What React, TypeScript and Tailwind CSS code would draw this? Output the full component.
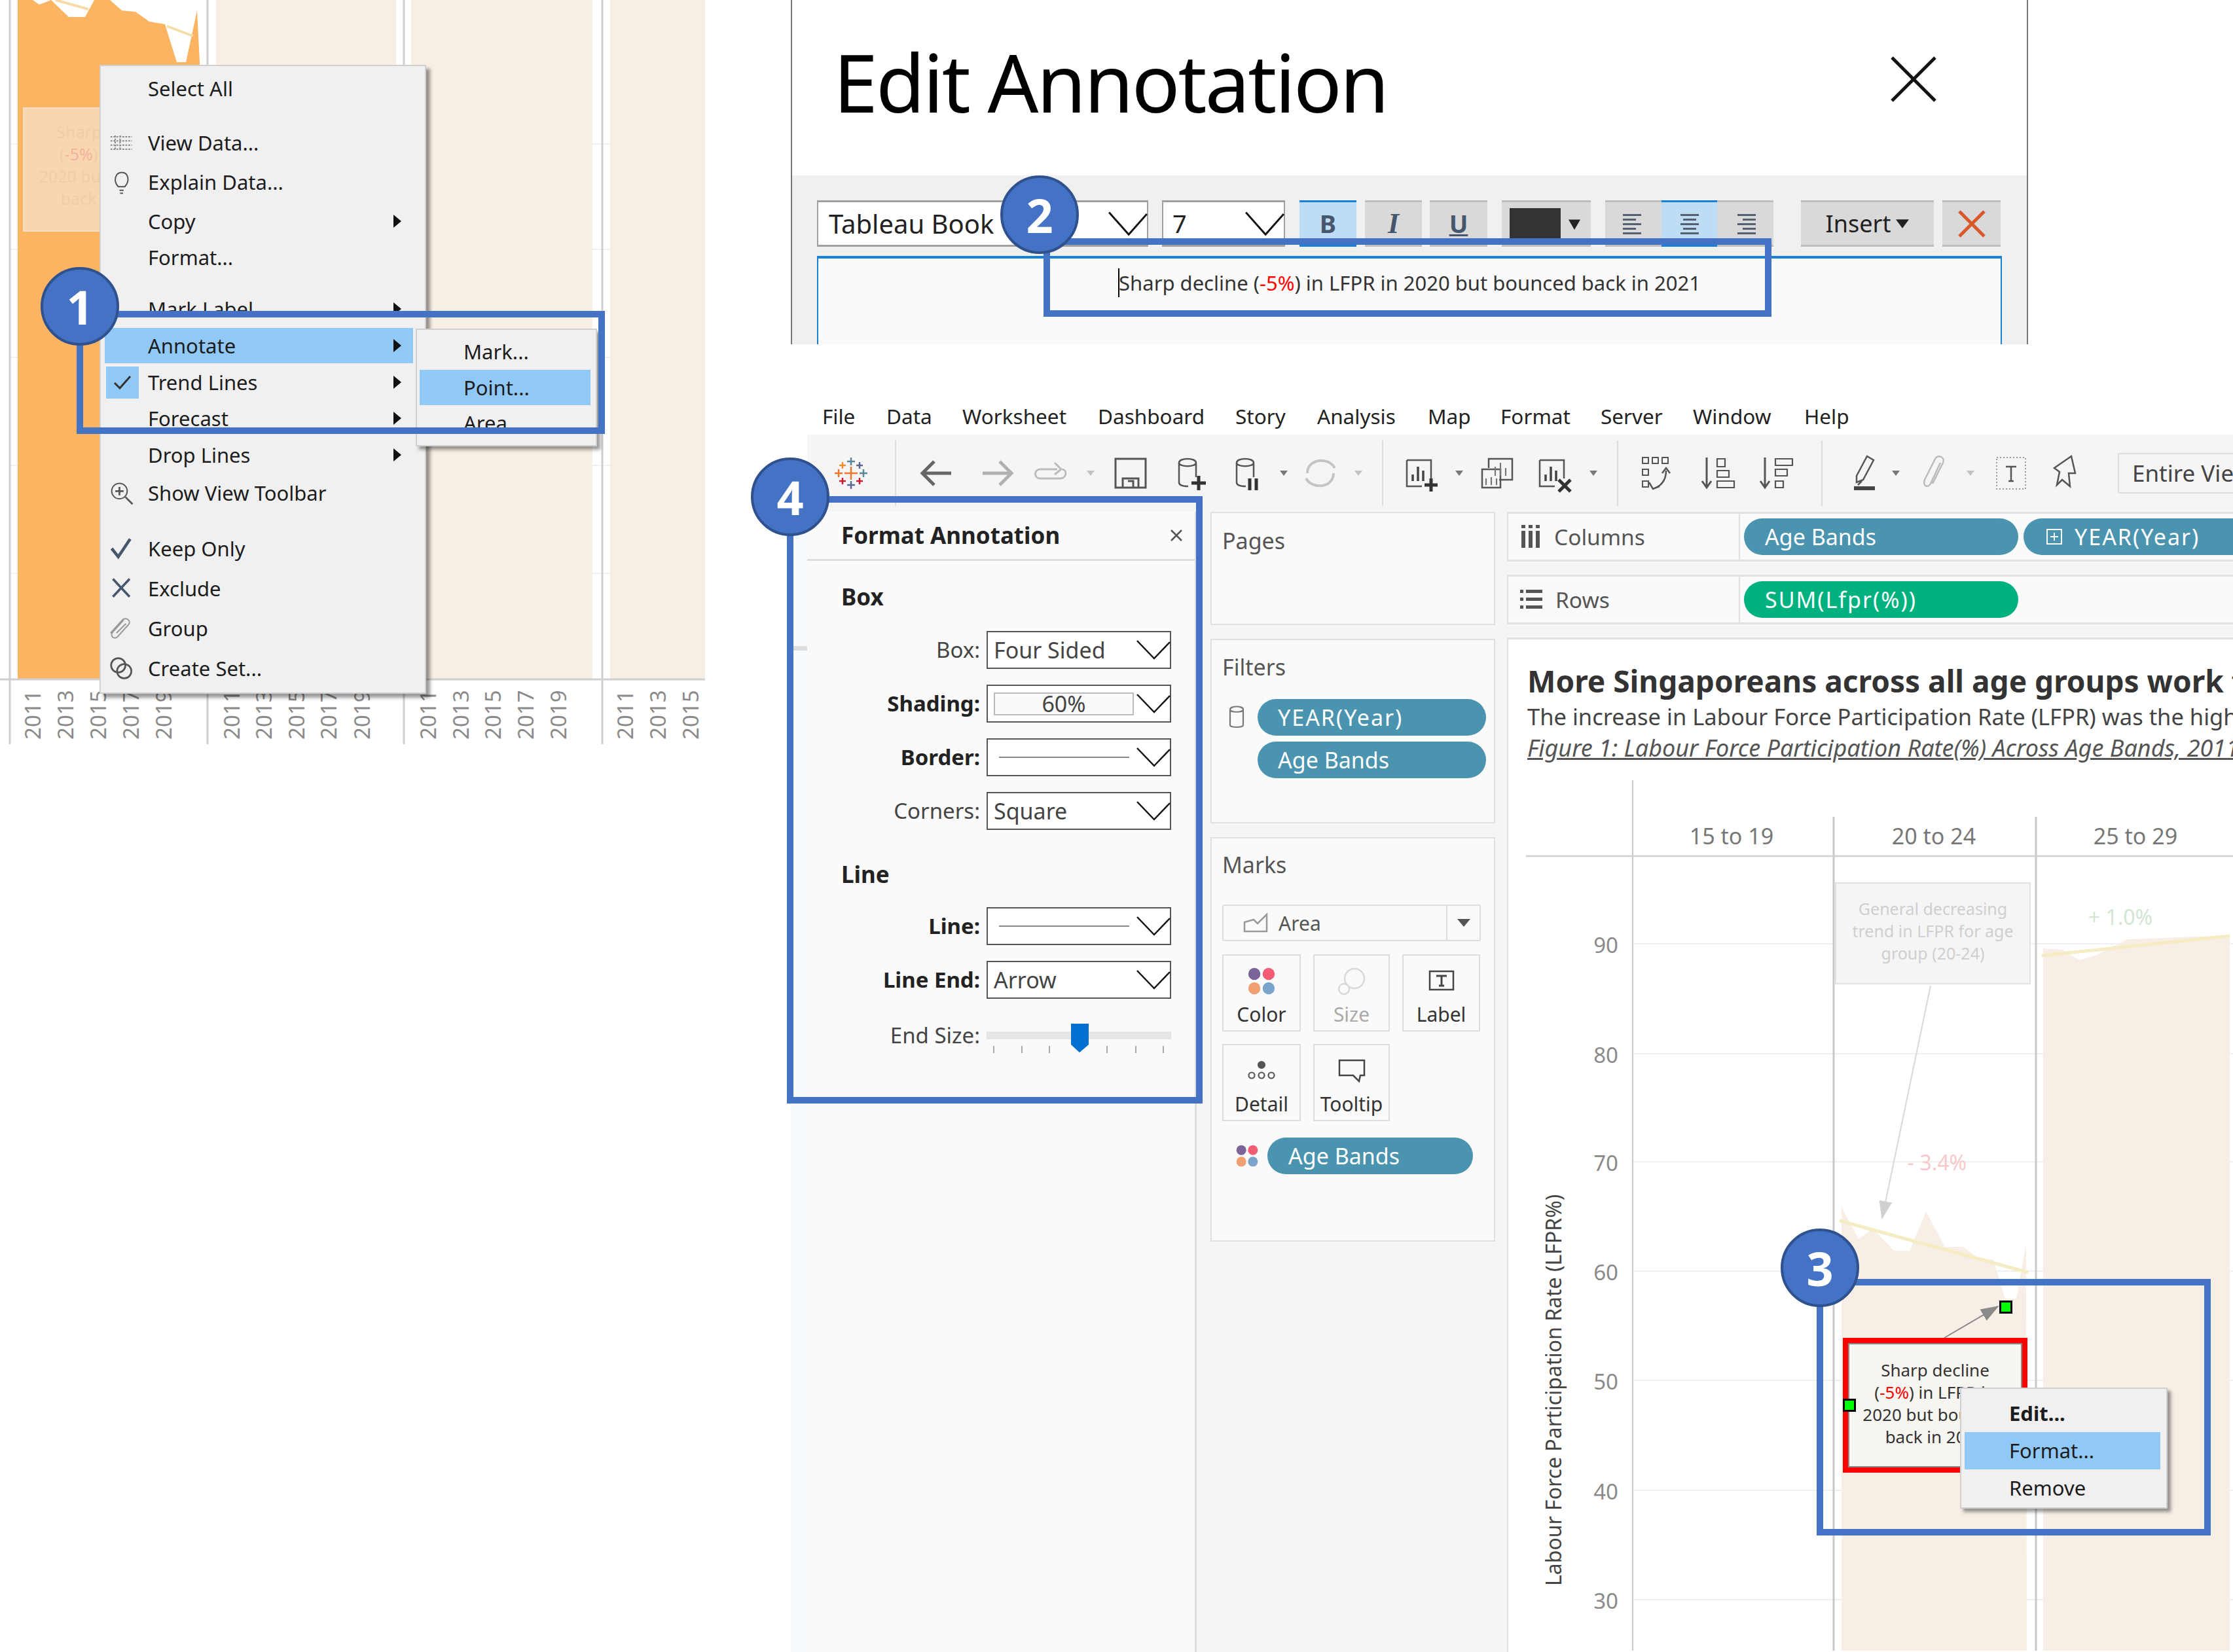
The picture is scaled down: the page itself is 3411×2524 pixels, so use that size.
import type { ReactNode } from "react";

const years = ["2011", "2013", "2015", "2017", "2019"];
const yearColumns = [
  { xs: [50, 100, 150, 200, 250], labels: years },
  { xs: [354, 403, 453, 502, 553], labels: years },
  { xs: [654, 704, 753, 803, 853], labels: years },
  { xs: [955, 1005, 1055], labels: years.slice(0, 3) },
];

// --- small drawings ---
function Caret({ className = "" }: { className?: string }) {
  return (
    <svg width="16" height="12" viewBox="0 0 16 12" className={`shrink-0 ${className}`}>
      <path d="M2 2 H14 L8 10 Z" fill="#777" />
    </svg>
  );
}

function Chevron({ big }: { big?: boolean }) {
  const w = big ? 60 : 52;
  const h = big ? 40 : 32;
  return (
    <svg width={w} height={h} viewBox="0 0 52 32" preserveAspectRatio="none" className="shrink-0 -mr-[1px]">
      <path d="M1 2 L27 29 L51 4" fill="none" stroke="#111" strokeWidth="2.5" />
    </svg>
  );
}

function SubArrow() {
  return (
    <svg width="12" height="20" viewBox="0 0 12 20" className="absolute left-[441px] top-[17px]">
      <path d="M0 0 L12 10 L0 20 Z" fill="#111" />
    </svg>
  );
}

function Ico({ children, className = "", w = 56 }: { children: ReactNode; className?: string; w?: number }) {
  return (
    <svg width={w} height="60" viewBox={`0 0 ${w} 60`} fill="none" stroke="#555" strokeWidth="2.5" className={`shrink-0 ${className}`}>
      {children}
    </svg>
  );
}

function TableauLogo({ className = "" }: { className?: string }) {
  const crosses = [
    [28, 30, 10, "#e8762b"],
    [28, 12, 6, "#5b879b"],
    [28, 48, 6, "#5b6591"],
    [9, 30, 6, "#e8762b"],
    [47, 30, 6, "#5b879b"],
    [15, 18, 5, "#eb912b"],
    [41, 18, 5, "#5b6591"],
    [15, 42, 5, "#c72035"],
    [41, 42, 5, "#c72035"],
  ] as const;
  return (
    <Ico className={className}>
      {crosses.map(([x, y, r, c]) => (
        <path key={`${x}-${y}`} d={`M${x - r} ${y} H${x + r} M${x} ${y - r} V${y + r}`} stroke={c} strokeWidth="2.5" />
      ))}
    </Ico>
  );
}

function Cylinder({ x = 12 }: { x?: number }) {
  return (
    <path d={`M${x} 14 C${x} 6 ${x + 26} 6 ${x + 26} 14 V36 M${x} 14 C${x} 21 ${x + 26} 21 ${x + 26} 14 M${x} 14 V44 C${x} 48 ${x + 6} 50 ${x + 14} 50`} />
  );
}

function SheetBars() {
  return (
    <>
      <path d="M5 10 H42 V38 M5 10 V50 H28" />
      <path d="M14 42 V32 M22 42 V20 M30 42 V26" strokeWidth="3.5" stroke="#444" />
    </>
  );
}

function Sep({ className = "" }: { className?: string }) {
  return <div className={`h-[100px] w-[2px] shrink-0 bg-[#dcdcdc] ${className}`} />;
}

// --- left screenshot: chart with context menu ---
function MenuRow({
  label,
  icon,
  arrow,
  className = "",
}: {
  label: string;
  icon?: ReactNode;
  arrow?: boolean;
  className?: string;
}) {
  return (
    <div className={`relative ml-[6px] mr-[18px] flex h-[54px] items-center ${className}`}>
      <div className="flex h-full w-[66px] shrink-0 items-center pl-[2px]">{icon}</div>
      <span>{label}</span>
      {arrow && <SubArrow />}
    </div>
  );
}

function MenuIcon({ children }: { children: ReactNode }) {
  return (
    <svg width="44" height="40" viewBox="0 0 48 44" fill="none" stroke="#555" strokeWidth="2.2" className="ml-[3px]">
      {children}
    </svg>
  );
}

function ChartMenu() {
  return (
    <section className="absolute left-0 top-0 h-[1140px] w-[1080px] overflow-hidden">
      <svg width="1080" height="1140" viewBox="0 0 1080 1140" className="absolute inset-0">
        {[220, 381, 546, 711, 876].map((y) => (
          <line key={y} x1="15" x2="1077" y1={y} y2={y} stroke="#f1f1f1" strokeWidth="2" />
        ))}
        <polygon
          points="27,0 50,0 60,7 78,0 105,26 130,26 144,0 168,0 186,16 207,18 228,33 252,37 270,95 284,95 301,16 305,95 305,1038 27,1038"
          fill="#fbb461"
        />
        <path d="M85 0 L135 14 M255 40 L295 55" stroke="#f6dca8" strokeWidth="4" />
        <rect x="330" y="0" width="275" height="1038" fill="#f7eee4" />
        <rect x="628" y="0" width="277" height="1038" fill="#f7eee4" />
        <rect x="932" y="0" width="145" height="1038" fill="#f7eee4" />
        {[15, 317, 617, 920].map((x) => (
          <line key={x} x1={x} x2={x} y1="0" y2="1137" stroke="#cfcfcf" strokeWidth="3" />
        ))}
        <line x1="0" x2="1077" y1="1038" y2="1038" stroke="#cfcfcf" strokeWidth="3" />
        {yearColumns.map((col) =>
          col.xs.map((x, i) => (
            <text
              key={x}
              transform={`translate(${x + 12} 1130) rotate(-90)`}
              fontSize="33"
              fill="#8a8a8a"
              fontFamily="'Noto Sans', sans-serif"
            >
              {col.labels[i]}
            </text>
          )),
        )}
      </svg>

      {/* faded annotation under the menu */}
      <div className="absolute left-[35px] top-[164px] flex h-[190px] w-[262px] flex-col items-center justify-center border-2 border-[#f6dcc2] bg-[#f8d6b0] pb-[14px] text-[25px] leading-[34px] text-[#efcdaa]">
        <span>Sharp decline</span>
        <span>
          (<span className="text-[#f4b3a0]">-5%</span>) in LFPR
        </span>
        <span>2020 but bounced</span>
        <span>back in 2021</span>
      </div>

      <div className="absolute left-[152px] top-[99px] h-[961px] w-[499px] border-2 border-[#d0d0d0] bg-[#f0f0f0] text-[31px] text-[#1c1c1c] shadow-[6px_6px_5px_rgba(0,0,0,0.4)]">
        <MenuRow label="Select All" className="mt-[7px]" />
        <MenuRow
          className="mt-[29px]"
          label="View Data..."
          icon={
            <MenuIcon>
              <path d="M4 12 H40 M4 19 H40 M4 26 H40 M4 33 H40 M12 10 V35 M20 10 V35" stroke="#888" strokeDasharray="3 2" />
            </MenuIcon>
          }
        />
        <MenuRow
          className="mt-[6px]"
          label="Explain Data..."
          icon={
            <MenuIcon>
              <path d="M17 30 C8 20 12 6 23 6 C34 6 37 20 28 30 Z M19 36 H26 M20 41 H25" />
            </MenuIcon>
          }
        />
        <MenuRow className="mt-[6px]" label="Copy" arrow />
        <MenuRow className="mt-[1px]" label="Format..." />
        <MenuRow className="mt-[25px]" label="Mark Label" arrow />
        <MenuRow className="mt-[2px] bg-[#90c8f6]" label="Annotate" arrow />
        <MenuRow
          className="mt-[2px]"
          label="Trend Lines"
          arrow
          icon={
            <div className="flex h-[49px] w-[50px] items-center justify-center bg-[#90c8f6]">
              <svg width="30" height="24" viewBox="0 0 30 24" fill="none" stroke="#333" strokeWidth="3">
                <path d="M3 13 L11 21 L27 3" />
              </svg>
            </div>
          }
        />
        <MenuRow className="mt-[1px]" label="Forecast" arrow />
        <MenuRow className="mt-[2px]" label="Drop Lines" arrow />
        <MenuRow
          className="mt-[4px]"
          label="Show View Toolbar"
          icon={
            <MenuIcon>
              <circle cx="19" cy="19" r="13" />
              <path d="M19 12 V26 M12 19 H26 M29 29 L41 41" strokeWidth="3" />
            </MenuIcon>
          }
        />
        <MenuRow
          className="mt-[31px]"
          label="Keep Only"
          icon={
            <MenuIcon>
              <path d="M6 22 L17 36 L37 6" strokeWidth="5" stroke="#46566c" />
            </MenuIcon>
          }
        />
        <MenuRow
          className="mt-[7px]"
          label="Exclude"
          icon={
            <MenuIcon>
              <path d="M8 6 L36 36 M36 6 L8 36" strokeWidth="4" stroke="#46566c" />
            </MenuIcon>
          }
        />
        <MenuRow
          className="mt-[7px]"
          label="Group"
          icon={
            <MenuIcon>
              <path d="M4 30 L24 8 C30 2 40 10 34 16 L16 36 C10 42 2 34 8 28 L26 8 M14 30 L30 14" stroke="#999" />
            </MenuIcon>
          }
        />
        <MenuRow
          className="mt-[7px]"
          label="Create Set..."
          icon={
            <MenuIcon>
              <circle cx="17" cy="17" r="12" strokeWidth="3" />
              <circle cx="27" cy="27" r="12" strokeWidth="3" />
            </MenuIcon>
          }
        />
      </div>

      {/* Annotate flyout */}
      <div className="absolute left-[635px] top-[502px] h-[180px] w-[277px] border-2 border-[#d0d0d0] bg-[#f0f0f0] pt-[6px] text-[31px] text-[#1c1c1c] shadow-[5px_5px_5px_rgba(0,0,0,0.4)]">
        <div className="flex h-[54px] items-center pl-[71px]">Mark...</div>
        <div className="ml-[4px] mr-[8px] mt-[1px] flex h-[54px] items-center bg-[#90c8f6] pl-[67px]">Point...</div>
        <div className="flex h-[54px] items-center pl-[71px]">Area...</div>
      </div>
    </section>
  );
}

// --- top right screenshot: Edit Annotation dialog ---
function ToolBtn({ children, active, className = "" }: { children?: ReactNode; active?: boolean; className?: string }) {
  return (
    <div
      className={`flex h-[71px] items-center justify-center border-y-[3px] ${
        active ? "border-[#1581d8] bg-[#bfdcf5]" : "border-[#bdbdbd] bg-[#d9d9d9]"
      } ${className}`}
    >
      {children}
    </div>
  );
}

function AlignIcon({ kind }: { kind: "left" | "center" | "right" }) {
  const lines = [28, 20, 28, 20, 28];
  return (
    <svg width="36" height="36" viewBox="0 0 36 36">
      {lines.map((w, i) => {
        const x = kind === "left" ? 2 : kind === "right" ? 34 - w : 18 - w / 2;
        return <rect key={i} x={x} y={3 + i * 7} width={w} height="3" fill="#54606f" />;
      })}
    </svg>
  );
}

function EditDialog() {
  return (
    <section className="absolute left-[1208px] top-0 flex h-[526px] w-[1890px] flex-col border-x-2 border-[#777]">
      <div className="flex h-[268px] items-start justify-between bg-white pl-[63px] pr-[138px]">
        <h1 className="mt-[42px] text-[122px] leading-[166px] tracking-[-2.9px] text-black">Edit Annotation</h1>
        <svg width="70" height="70" viewBox="0 0 70 70" className="mt-[86px]">
          <path d="M2 2 L68 68 M68 2 L2 68" stroke="#111" strokeWidth="5" />
        </svg>
      </div>
      <div className="flex flex-1 flex-col bg-[#f0f0f0] px-[38px] pt-[38px]">
        <div className="flex items-start">
          <div className="flex h-[71px] w-[506px] items-center justify-between border-2 border-y-[3px] border-[#a0a0a0] bg-white pl-[16px] text-[40px] text-[#222]">
            Tableau Book
            <Chevron big />
          </div>
          <div className="ml-[21px] flex h-[71px] w-[188px] items-center justify-between border-2 border-y-[3px] border-[#a0a0a0] bg-white pl-[14px] text-[38px] text-[#222]">
            7
            <Chevron big />
          </div>
          <ToolBtn active className="ml-[22px] w-[87px] text-[38px] font-bold text-[#46566c]">
            B
          </ToolBtn>
          <ToolBtn className="ml-[13px] w-[87px] font-['Liberation_Serif',serif] text-[44px] font-bold italic text-[#46566c]">
            I
          </ToolBtn>
          <ToolBtn className="ml-[12px] w-[88px] text-[38px] font-bold text-[#46566c] underline">U</ToolBtn>
          <ToolBtn className="ml-[22px] w-[136px] justify-start pl-[12px]">
            <div className="h-[48px] w-[78px] bg-[#333]" />
            <svg width="18" height="18" viewBox="0 0 14 14" className="ml-[12px]">
              <path d="M0 2 H14 L7 14 Z" fill="#222" />
            </svg>
          </ToolBtn>
          <div className="ml-[22px] flex">
            <ToolBtn className="w-[86px]">
              <AlignIcon kind="left" />
            </ToolBtn>
            <ToolBtn active className="w-[85px]">
              <AlignIcon kind="center" />
            </ToolBtn>
            <ToolBtn className="w-[86px]">
              <AlignIcon kind="right" />
            </ToolBtn>
          </div>
          <ToolBtn className="ml-[42px] w-[203px] gap-[8px] text-[36px] text-[#222]">
            Insert
            <svg width="20" height="14" viewBox="0 0 18 12">
              <path d="M0 0 H18 L9 12 Z" fill="#222" />
            </svg>
          </ToolBtn>
          <ToolBtn className="ml-[13px] w-[89px]">
            <svg width="46" height="46" viewBox="0 0 46 46">
              <path d="M4 4 L42 42 M42 4 L4 42" stroke="#d8572b" strokeWidth="5" />
            </svg>
          </ToolBtn>
        </div>
        <div className="mt-[14px] flex flex-1 justify-center border-x-2 border-t-[4px] border-[#1581d8] bg-[#fafafa] pt-[17px]">
          <div className="flex h-[40px] items-center whitespace-nowrap text-[31px] leading-[40px] text-[#333]">
            <span className="mr-[-1px] h-[44px] w-[2px] bg-black" />
            Sharp decline (<span className="text-[#f00]">-5%</span>) in LFPR in 2020 but bounced back in 2021
          </div>
        </div>
      </div>
    </section>
  );
}

// --- bottom right screenshot: Tableau window ---
function Pill({ children, className = "" }: { children: ReactNode; className?: string }) {
  return (
    <div className={`flex h-[56px] shrink-0 items-center rounded-full text-[34px] text-white ${className}`}>{children}</div>
  );
}

function FormatRow({ label, bold, children }: { label: string; bold?: boolean; children: ReactNode }) {
  return (
    <div className="flex h-[58px] items-center">
      <div className={`w-[264px] text-right text-[33px] ${bold ? "font-bold text-[#222]" : "text-[#444]"}`}>{label}</div>
      <div className="ml-[10px] flex h-[58px] w-[282px] items-center justify-between border-2 border-[#555] bg-white pl-[9px] text-[34px] text-[#444]">
        {children}
      </div>
    </div>
  );
}

function FormatPanel() {
  return (
    <aside className="w-[595px] shrink-0 border-r-[3px] border-[#ddd] bg-[#fafafa]">
      <div className="flex h-[75px] items-center justify-between border-b-[3px] border-[#ddd] pl-[52px] pr-[18px]">
        <span className="text-[35px] font-bold text-[#222]">Format Annotation</span>
        <svg width="20" height="20" viewBox="0 0 20 20">
          <path d="M2 2 L18 18 M18 2 L2 18" stroke="#555" strokeWidth="2.5" />
        </svg>
      </div>
      <h3 className="mt-[30px] h-[50px] pl-[52px] text-[35px] font-bold leading-[50px] text-[#222]">Box</h3>
      <div className="mt-[27px] flex flex-col gap-[24px]">
        <FormatRow label="Box:">
          Four Sided
          <Chevron />
        </FormatRow>
        <FormatRow label="Shading:" bold>
          <div className="flex h-[35px] w-[214px] items-center justify-center border-2 border-[#bbb] bg-[#fafafa]">60%</div>
          <Chevron />
        </FormatRow>
        <FormatRow label="Border:" bold>
          <div className="ml-[8px] h-[2px] w-[199px] bg-[#888]" />
          <Chevron />
        </FormatRow>
        <FormatRow label="Corners:">
          Square
          <Chevron />
        </FormatRow>
      </div>
      <h3 className="mt-[43px] h-[50px] pl-[52px] text-[35px] font-bold leading-[50px] text-[#222]">Line</h3>
      <div className="mt-[25px] flex flex-col gap-[24px]">
        <FormatRow label="Line:" bold>
          <div className="ml-[8px] h-[2px] w-[199px] bg-[#888]" />
          <Chevron />
        </FormatRow>
        <FormatRow label="Line End:" bold>
          Arrow
          <Chevron />
        </FormatRow>
      </div>
      <div className="mt-[27px] flex h-[58px] items-center">
        <div className="w-[264px] text-right text-[33px] text-[#444]">End Size:</div>
        <svg width="282" height="58" viewBox="0 0 282 58" className="ml-[10px]">
          <rect x="0" y="24" width="282" height="10" fill="#e6e6e6" stroke="#ddd" />
          {[11, 54, 96, 184, 228, 270].map((x) => (
            <line key={x} x1={x} x2={x} y1="45" y2="56" stroke="#aaa" strokeWidth="2" />
          ))}
          <path d="M129 11 H156 V43 L142 55 L129 43 Z" fill="#0070d0" />
        </svg>
      </div>
    </aside>
  );
}

function MarkBtn({ label, icon, muted }: { label: string; icon: ReactNode; muted?: boolean }) {
  return (
    <div className="flex h-[118px] flex-col items-center justify-between border-2 border-[#ddd] pb-[6px] pt-[14px]">
      <div className="flex h-[50px] items-center">{icon}</div>
      <span className={`text-[30px] leading-[36px] ${muted ? "text-[#aaa]" : "text-[#333]"}`}>{label}</span>
    </div>
  );
}

function ColorDots({ size = 42 }: { size?: number }) {
  return (
    <svg width={size} height={size} viewBox="0 0 50 50">
      <circle cx="12" cy="12" r="11" fill="#7b6497" />
      <circle cx="38" cy="12" r="11" fill="#f25c74" />
      <circle cx="12" cy="38" r="11" fill="#f0a070" />
      <circle cx="38" cy="38" r="11" fill="#7ba4cc" />
    </svg>
  );
}

function Sidebar() {
  return (
    <div className="flex w-[474px] shrink-0 flex-col gap-[21px] pl-[21px] pr-[18px]">
      <div className="h-[173px] border-2 border-[#e0e0e0] bg-[#fafafa] pl-[16px] pt-[20px] text-[34px] leading-[44px] text-[#555]">
        Pages
      </div>
      <div className="h-[282px] border-2 border-[#e0e0e0] bg-[#fafafa] pl-[16px] pr-[12px] pt-[19px]">
        <div className="h-[44px] text-[34px] leading-[44px] text-[#555]">Filters</div>
        <div className="mt-[27px] flex items-center">
          <svg width="44" height="40" viewBox="0 0 44 40" fill="none" stroke="#777" strokeWidth="2.2" className="shrink-0">
            <path d="M12 8 C12 2 32 2 32 8 V32 C32 36 12 36 12 32 Z M12 8 C12 13 32 13 32 8" />
          </svg>
          <Pill className="ml-[10px] w-[349px] bg-[#4a94b0] pl-[31px] tracking-[2px]">YEAR(Year)</Pill>
        </div>
        <Pill className="ml-[54px] mt-[9px] w-[349px] bg-[#4a94b0] pl-[31px]">Age Bands</Pill>
      </div>
      <div className="h-[618px] border-2 border-[#e0e0e0] bg-[#fafafa] pl-[16px] pt-[18px]">
        <div className="h-[44px] text-[34px] leading-[44px] text-[#555]">Marks</div>
        <div className="mt-[39px] flex h-[56px] w-[395px] items-center rounded-[3px] border-2 border-[#ddd]">
          <svg width="44" height="34" viewBox="0 0 44 34" fill="none" stroke="#999" strokeWidth="2.5" className="ml-[28px]">
            <path d="M4 30 V16 L18 12 L24 18 L38 4 V30 Z" />
          </svg>
          <span className="ml-[12px] flex-1 text-[30px] text-[#555]">Area</span>
          <div className="flex h-full w-[51px] items-center justify-center border-l-2 border-[#ddd]">
            <svg width="20" height="12" viewBox="0 0 20 12">
              <path d="M0 0 H20 L10 12 Z" fill="#555" />
            </svg>
          </div>
        </div>
        <div className="mt-[20px] grid grid-cols-[120px_117px_119px] gap-x-[19px] gap-y-[19px]">
          <MarkBtn label="Color" icon={<ColorDots />} />
          <MarkBtn
            muted
            label="Size"
            icon={
              <svg width="44" height="44" viewBox="0 0 44 44" fill="none" stroke="#d9d9d9" strokeWidth="2.5">
                <circle cx="26" cy="18" r="15" />
                <circle cx="10" cy="34" r="8" fill="#fafafa" />
              </svg>
            }
          />
          <MarkBtn
            label="Label"
            icon={
              <svg width="40" height="34" viewBox="0 0 40 34" fill="none" stroke="#444" strokeWidth="2.5">
                <rect x="2" y="2" width="36" height="28" />
                <path d="M12 9 H28 M20 9 V24 M16 24 H24" strokeWidth="3" />
              </svg>
            }
          />
          <MarkBtn
            label="Detail"
            icon={
              <svg width="42" height="34" viewBox="0 0 42 34" fill="none" stroke="#555" strokeWidth="2.2">
                <circle cx="21" cy="8" r="5" fill="#555" />
                <circle cx="6" cy="24" r="4.5" />
                <circle cx="21" cy="24" r="4.5" />
                <circle cx="36" cy="24" r="4.5" />
              </svg>
            }
          />
          <MarkBtn
            label="Tooltip"
            icon={
              <svg width="44" height="38" viewBox="0 0 44 38" fill="none" stroke="#444" strokeWidth="2.5">
                <path d="M3 3 H41 V26 H35 L33 35 L24 26 H3 Z" />
              </svg>
            }
          />
        </div>
        <div className="mt-[25px] flex items-center pl-[21px]">
          <ColorDots size={34} />
          <Pill className="ml-[14px] w-[314px] bg-[#4a94b0] pl-[32px]">Age Bands</Pill>
        </div>
      </div>
    </div>
  );
}

function Shelf({ label, icon, children }: { label: string; icon: ReactNode; children: ReactNode }) {
  return (
    <div className="flex h-[76px] border-y-[3px] border-l-2 border-[#e0e0e0] bg-[#fafafa]">
      <div className="flex w-[354px] shrink-0 items-center border-r-2 border-[#e0e0e0] pl-[18px] text-[33.5px] text-[#555]">
        {icon}
        <span className="ml-[20px]">{label}</span>
      </div>
      <div className="flex items-center gap-[8px] pl-[6px]">{children}</div>
    </div>
  );
}

function Chart() {
  const yTicks = [
    ["90", 1444],
    ["80", 1612],
    ["70", 1777],
    ["60", 1944],
    ["50", 2111],
    ["40", 2279],
    ["30", 2446],
  ] as const;
  return (
    <div className="relative min-h-0 flex-1">
      {/* marks and axes, in page coordinates */}
      <svg width="1108" height="1330" viewBox="2303 1194 1108 1330" className="absolute inset-0">
        <defs>
          <marker id="ann" markerWidth="14" markerHeight="10" refX="13" refY="5" orient="auto">
            <path d="M0 0 L14 5 L0 10 Z" fill="#d0d0d0" />
          </marker>
          <marker id="ann2" markerWidth="14" markerHeight="10" refX="13" refY="5" orient="auto">
            <path d="M0 0 L14 5 L0 10 Z" fill="#8a8a8a" />
          </marker>
        </defs>
        {yTicks.map(([, y]) => (
          <line key={y} x1="2493" x2="3411" y1={y} y2={y} stroke="#f0f0f0" strokeWidth="2" />
        ))}
        <polygon
          points="2812,1846 2838,1895 2860,1879 2892,1913 2916,1913 2941,1853 2970,1907 2998,1907 3019,1923 3044,1927 3062,1986 3079,1986 3094,1903 3095,2524 2812,2524"
          fill="#f7efe5"
        />
        <polygon points="3120,1451 3150,1453 3175,1469 3200,1462 3249,1437 3405,1431 3405,2524 3120,2524" fill="#f7efe5" />
        <line x1="2809" y1="1867" x2="3097" y2="1946" stroke="#f5ecc4" strokeWidth="5" />
        <line x1="3118" y1="1462" x2="3405" y2="1432" stroke="#f5ecc4" strokeWidth="5" />
        <line x1="2493" x2="2493" y1="1194" y2="2524" stroke="#c8c8c8" strokeWidth="2" />
        <line x1="2800" x2="2800" y1="1250" y2="2524" stroke="#c8c8c8" strokeWidth="3" />
        <line x1="3109" x2="3109" y1="1250" y2="2524" stroke="#c8c8c8" strokeWidth="3" />
        <line x1="2330" x2="3411" y1="1310" y2="1310" stroke="#d0d0d0" strokeWidth="2.5" />
        <line x1="2948" y1="1508" x2="2874" y2="1863" stroke="#d8d8d8" strokeWidth="2" markerEnd="url(#ann)" />
        <line x1="2969" y1="2046" x2="3051" y2="1998" stroke="#8a8a8a" strokeWidth="2" markerEnd="url(#ann2)" />
        {yTicks.map(([t, y]) => (
          <text key={t} x="2471" y={y + 14} textAnchor="end" fontSize="33" fill="#8a8a8a" fontFamily="'Noto Sans', sans-serif">
            {t}
          </text>
        ))}
        <text x="2644" y="1292" textAnchor="middle" fontSize="34" fill="#777" fontFamily="'Noto Sans', sans-serif">
          15 to 19
        </text>
        <text x="2953" y="1292" textAnchor="middle" fontSize="34" fill="#777" fontFamily="'Noto Sans', sans-serif">
          20 to 24
        </text>
        <text x="3261" y="1292" textAnchor="middle" fontSize="34" fill="#777" fontFamily="'Noto Sans', sans-serif">
          25 to 29
        </text>
        <text
          transform="translate(2384 2425) rotate(-90)"
          fontSize="32"
          fill="#444"
          fontFamily="'Noto Sans', sans-serif"
        >
          Labour Force Participation Rate (LFPR%)
        </text>
        <text x="2958" y="1790" textAnchor="middle" fontSize="32" fill="#f8c9c9" fontFamily="'Noto Sans', sans-serif">
          - 3.4%
        </text>
        <text x="3238" y="1415" textAnchor="middle" fontSize="32" fill="#d3e6d3" fontFamily="'Noto Sans', sans-serif">
          + 1.0%
        </text>
      </svg>

      {/* faded annotation */}
      <div className="absolute left-[499px] top-[156px] flex h-[156px] w-[299px] flex-col items-center justify-center border-2 border-[#e2e2e2] bg-[#f5f5f5] pb-[8px] text-[25px] leading-[34px] text-[#cfcfcf]">
        <span>General decreasing</span>
        <span>trend in LFPR for age</span>
        <span>group (20-24)</span>
      </div>

      {/* selected annotation */}
      <div className="absolute left-[511px] top-[852px] h-[206px] w-[282px] border-[8px] border-[#f00] bg-[#f7f5f0]">
        <div className="flex h-full flex-col items-center justify-center whitespace-nowrap border-2 border-[#888] pb-[6px] text-[26px] leading-[34px] text-[#333]">
          <span>Sharp decline</span>
          <span>
            (<span className="text-[#f00]">-5%</span>) in LFPR in
          </span>
          <span>2020 but bounced</span>
          <span>back in 2021</span>
        </div>
      </div>
      <div className="absolute left-[750px] top-[795px] h-[20px] w-[20px] border-[3px] border-black bg-[#0f0]" />
      <div className="absolute left-[511px] top-[945px] h-[20px] w-[20px] border-[3px] border-black bg-[#0f0]" />

      {/* right click menu */}
      <div className="absolute left-[690px] top-[928px] h-[185px] w-[317px] border-2 border-[#d0d0d0] bg-[#f0f0f0] pt-[9px] text-[31px] text-[#1c1c1c] shadow-[5px_5px_5px_rgba(0,0,0,0.4)]">
        <div className="flex h-[57px] items-center pl-[73px] font-bold">Edit...</div>
        <div className="ml-[5px] mr-[9px] flex h-[57px] items-center bg-[#90c8f6] pl-[68px]">Format...</div>
        <div className="flex h-[57px] items-center pl-[73px]">Remove</div>
      </div>
    </div>
  );
}

function TableauWindow() {
  const menus = [
    ["File", "w-[98px]"],
    ["Data", "w-[116px]"],
    ["Worksheet", "w-[207px]"],
    ["Dashboard", "w-[210px]"],
    ["Story", "w-[125px]"],
    ["Analysis", "w-[169px]"],
    ["Map", "w-[111px]"],
    ["Format", "w-[153px]"],
    ["Server", "w-[141px]"],
    ["Window", "w-[170px]"],
    ["Help", "w-[90px]"],
  ];
  return (
    <section className="absolute left-[1208px] top-[612px] flex h-[1912px] w-[2203px] flex-col overflow-hidden">
      <nav className="flex h-[52px] items-center pb-[4px] pl-[48px] text-[31.5px] text-[#222]">
        {menus.map(([m, w]) => (
          <span key={m} className={w}>
            {m}
          </span>
        ))}
      </nav>

      <div className="ml-[25px] flex h-[118px] items-center bg-[#f5f5f5]">
        <TableauLogo className="ml-[39px]" />
        <Sep className="ml-[39px]" />
        <Ico className="ml-[34px]">
          <path d="M50 30 H8 M24 12 L6 30 L24 48" strokeWidth="5" stroke="#666" />
        </Ico>
        <Ico className="ml-[36px]">
          <path d="M6 30 H48 M32 12 L50 30 L32 48" strokeWidth="5" stroke="#b0b0b0" />
        </Ico>
        <Ico className="ml-[28px]">
          <path d="M36 24 H10 C0 24 0 38 10 38 H40 C50 38 52 26 44 24 M32 14 L42 24 L32 32" stroke="#bbb" strokeWidth="3" />
        </Ico>
        <Caret className="ml-[23px] opacity-40" />
        <Ico className="ml-[25px]">
          <path d="M5 8 H51 V52 H5 Z M16 52 V38 H40 V52 M24 42 H32 V52" stroke="#555" strokeWidth="3" />
        </Ico>
        <Ico className="ml-[34px]">
          <Cylinder />
          <path d="M42 34 V56 M31 45 H53" stroke="#333" strokeWidth="5" />
        </Ico>
        <Ico className="ml-[32px]">
          <Cylinder />
          <path d="M32 38 V56 M42 38 V56" stroke="#333" strokeWidth="5" />
        </Ico>
        <Caret className="ml-[20px]" />
        <Ico className="ml-[20px]">
          <path d="M8 30 C8 8 40 4 50 22 M48 30 C48 52 16 56 6 38" stroke="#c4c4c4" strokeWidth="4" />
        </Ico>
        <Caret className="ml-[22px] opacity-40" />
        <Sep className="ml-[28px]" />
        <Ico className="ml-[31px]">
          <SheetBars />
          <path d="M42 38 V58 M32 48 H52" stroke="#333" strokeWidth="5" />
        </Ico>
        <Caret className="ml-[21px]" />
        <Ico className="ml-[23px]">
          <path d="M14 22 V8 H50 V40 H30 M4 24 H32 V52 H4 Z" />
          <path d="M24 34 V20 M32 34 V14 M40 34 V22 M10 48 V38 M18 48 V36 M26 48 V38" stroke="#777" strokeWidth="2.2" />
        </Ico>
        <Ico className="ml-[31px]">
          <SheetBars />
          <path d="M34 40 L52 58 M52 40 L34 58" stroke="#333" strokeWidth="5" />
        </Ico>
        <Caret className="ml-[23px]" />
        <Sep className="ml-[28px]" />
        <Ico className="ml-[29px]">
          <path d="M8 6 H17 V15 H8 Z M23 6 H32 V15 H23 Z M38 6 H47 V15 H38 Z M8 24 H17 V33 H8 Z M8 42 H17 V51 H8 Z" strokeWidth="2" />
          <path d="M44 26 C44 42 36 50 24 54 M18 44 L24 54 L34 50 M38 30 L44 22 L50 30" strokeWidth="2.5" />
        </Ico>
        <Ico className="ml-[40px]">
          <path d="M10 6 V50 M3 42 L10 52 L17 42" strokeWidth="3" />
          <path d="M26 8 H38 V20 H26 Z M26 26 H44 V36 H26 Z M26 42 H52 V52 H26 Z" strokeWidth="2.2" />
        </Ico>
        <Ico className="ml-[33px]">
          <path d="M10 6 V50 M3 42 L10 52 L17 42" strokeWidth="3" />
          <path d="M26 8 H52 V18 H26 Z M26 24 H44 V34 H26 Z M26 42 H38 V52 H26 Z" strokeWidth="2.2" />
        </Ico>
        <Sep className="ml-[40px]" />
        <Ico className="ml-[36px]">
          <path d="M32 4 L42 10 L26 40 L16 44 L16 34 Z M18 48 L24 42" />
          <rect x="12" y="50" width="32" height="6" fill="#444" stroke="none" />
        </Ico>
        <Caret className="ml-[12px]" />
        <Ico className="ml-[24px]">
          <path d="M36 14 L22 44 C18 54 8 50 12 40 L28 8 C32 0 44 6 40 14 L24 46" stroke="#bbb" />
        </Ico>
        <Caret className="ml-[18px] opacity-40" />
        <Ico className="ml-[26px]">
          <rect x="6" y="6" width="44" height="48" strokeDasharray="2 3" stroke="#999" strokeWidth="2" />
          <path d="M20 20 H36 M28 20 V42 M24 42 H32" stroke="#555" strokeWidth="2.5" />
        </Ico>
        <Ico className="ml-[28px]">
          <path d="M36 4 L42 30 L32 30 L34 50 L22 40 L14 48 L18 28 L10 22 Z" />
        </Ico>
        <div className="ml-[51px] flex h-[62px] flex-1 items-center rounded-l-[3px] border-2 border-r-0 border-[#ddd] pl-[20px] text-[35px] whitespace-nowrap text-[#444]">
          Entire View
        </div>
      </div>

      <div className="flex min-h-0 flex-1">
        <div className="relative w-[25px] shrink-0 bg-[#f6fafc]">
          <div className="absolute left-[4px] top-[205px] h-[7px] w-[21px] bg-[#ddd]" />
        </div>
        <div className="flex min-w-0 flex-1 bg-[#f5f5f5]">
          <FormatPanel />
          <Sidebar />
          <div className="flex min-w-0 flex-1 flex-col gap-[20px]">
            <Shelf
              label="Columns"
              icon={
                <svg width="32" height="38" viewBox="0 0 32 38" fill="#555">
                  <rect x="2" y="10" width="6" height="26" />
                  <rect x="13" y="10" width="6" height="26" />
                  <rect x="24" y="10" width="6" height="26" />
                  <rect x="2" y="1" width="6" height="5" />
                  <rect x="13" y="1" width="6" height="5" />
                  <rect x="24" y="1" width="6" height="5" />
                </svg>
              }
            >
              <Pill className="w-[419px] bg-[#4a94b0] pl-[32px]">Age Bands</Pill>
              <Pill className="w-[400px] bg-[#4a94b0] pl-[34px] tracking-[2px]">
                <svg width="26" height="26" viewBox="0 0 26 26" fill="none" stroke="#fff" strokeWidth="2" className="mr-[18px]">
                  <rect x="2" y="2" width="22" height="22" />
                  <path d="M13 7 V19 M7 13 H19" />
                </svg>
                YEAR(Year)
              </Pill>
            </Shelf>
            <Shelf
              label="Rows"
              icon={
                <svg width="34" height="34" viewBox="0 0 34 34" fill="#555">
                  <rect x="0" y="2" width="5" height="5" />
                  <rect x="9" y="2" width="25" height="5" />
                  <rect x="0" y="14" width="5" height="5" />
                  <rect x="9" y="14" width="25" height="5" />
                  <rect x="0" y="26" width="5" height="5" />
                  <rect x="9" y="26" width="25" height="5" />
                </svg>
              }
            >
              <Pill className="w-[419px] bg-[#00b180] pl-[32px] tracking-[2px]">SUM(Lfpr(%))</Pill>
            </Shelf>
            <div className="flex min-h-0 flex-1 flex-col overflow-hidden border-l-2 border-t-[3px] border-[#e0e0e0] bg-white">
              <div className="h-[215px] whitespace-nowrap pl-[29px] pt-[38px]">
                <div className="h-[50px] text-[46px] font-bold leading-[50px] text-[#333]">
                  More Singaporeans across all age groups work full-time
                </div>
                <div className="mt-[8px] h-[44px] text-[34.5px] leading-[44px] text-[#444]">
                  The increase in Labour Force Participation Rate (LFPR) was the highest in this period
                </div>
                <div className="mt-[4px] h-[44px] text-[36px] italic leading-[44px] text-[#555] underline">
                  Figure 1: Labour Force Participation Rate(%) Across Age Bands, 2011-2021
                </div>
              </div>
              <Chart />
            </div>
          </div>
        </div>
      </div>
    </section>
  );
}

// --- numbered callouts on top of the screenshots ---
const frames = [
  "left-[117px] top-[475px] h-[188px] w-[807px]",
  "left-[1594px] top-[364px] h-[120px] w-[1112px]",
  "left-[2775px] top-[1954px] h-[392px] w-[602px]",
  "left-[1202px] top-[758px] h-[928px] w-[635px]",
];
const badges = [
  { n: 1, pos: "left-[62px] top-[408px]" },
  { n: 2, pos: "left-[1528px] top-[268px]" },
  { n: 3, pos: "left-[2720px] top-[1877px]" },
  { n: 4, pos: "left-[1147px] top-[699px]" },
];

export default function App() {
  return (
    <div className="relative h-[2524px] w-[3411px] overflow-hidden bg-white font-['Noto_Sans',sans-serif]">
      <ChartMenu />
      <EditDialog />
      <TableauWindow />
      {frames.map((f) => (
        <div key={f} className={`absolute border-[10px] border-[#4472c4] ${f}`} />
      ))}
      {badges.map((b) => (
        <div
          key={b.n}
          className={`absolute flex h-[120px] w-[120px] items-center justify-center rounded-full border-[4px] border-[#2f528f] bg-[#4472c4] text-[72px] font-bold text-white ${b.pos}`}
        >
          {b.n}
        </div>
      ))}
    </div>
  );
}
